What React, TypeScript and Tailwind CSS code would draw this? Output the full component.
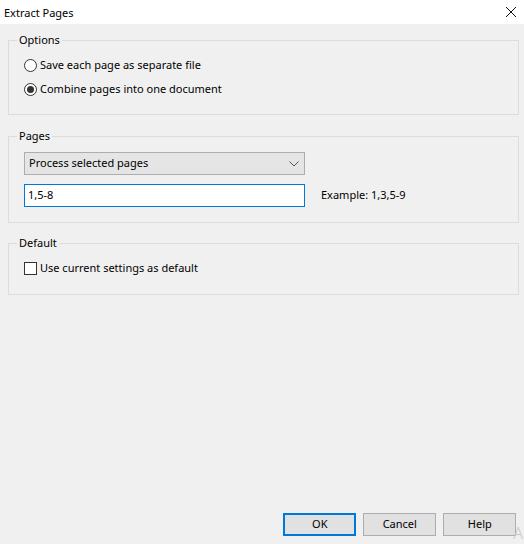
import React from "react"

const font = { fontFamily: '"Noto Sans", "Open Sans", sans-serif' }

function Radio({ checked, label }: { checked?: boolean; label: string }) {
  return (
    <label className="flex h-[24px] items-center">
      <span className="ml-[15px] flex h-[13px] w-[13px] items-center justify-center rounded-full border border-[#333333] bg-white">
        {checked && <span className="h-[7px] w-[7px] rounded-full bg-[#333333]" />}
      </span>
      <span className="ml-[3px]">{label}</span>
    </label>
  )
}

function Group({ title, className, children }: { title: string; className?: string; children: React.ReactNode }) {
  return (
    <fieldset className={`ml-[8px] mr-[5px] border border-[#dcdcdc] ${className ?? ""}`}>
      <legend className="ml-[8px] h-[16px] px-[2px] leading-[16px]">{title}</legend>
      {children}
    </fieldset>
  )
}

export default function App() {
  return (
    <div className="flex h-[544px] w-[524px] flex-col overflow-hidden bg-[#f0f0f0] text-[11px] text-black" style={font}>
      {/* title bar */}
      <div className="flex h-[24px] items-center justify-between bg-white pl-[4px] pr-[6px]">
        <span className="mt-[1px] leading-[16px]">Extract Pages</span>
        <svg width="12" height="12" viewBox="0 0 12 12" className="mr-[1px]">
          <path d="M1 1 L11 11 M11 1 L1 11" stroke="#111" strokeWidth="1" />
        </svg>
      </div>

      <Group title="Options" className="mt-[8px] pb-[13px]">
        <div className="mt-[5px]">
          <Radio label="Save each page as separate file" />
          <Radio checked label="Combine pages into one document" />
        </div>
      </Group>

      <Group title="Pages" className="mt-[13px] pb-[15px]">
        <div className="mt-[8px] ml-[15px] flex h-[23px] w-[281px] items-center justify-between border border-[#adadad] bg-[#e5e5e5] pl-[4px] pr-[5px]">
          <span>Process selected pages</span>
          <svg width="10" height="6" viewBox="0 0 10 6">
            <path d="M0.5 0.5 L5 5 L9.5 0.5" fill="none" stroke="#555" strokeWidth="1" />
          </svg>
        </div>
        <div className="mt-[9px] flex items-center">
          <div className="ml-[15px] flex h-[23px] w-[281px] items-center border border-[#0078d7] bg-white pl-[3px]">
            1,5-8
          </div>
          <span className="ml-[16px]">Example: 1,3,5-9</span>
        </div>
      </Group>

      <Group title="Default" className="mt-[12px] pb-[14px]">
        <label className="mt-[5px] flex h-[24px] items-center">
          <span className="ml-[15px] h-[13px] w-[13px] border border-[#333333] bg-white" />
          <span className="ml-[3px]">Use current settings as default</span>
        </label>
      </Group>

      <div className="mt-auto flex h-[44px] items-start justify-end">
        <button className="mt-[13px] h-[23px] w-[73px] border-2 border-[#0078d7] bg-[#e1e1e1]">OK</button>
        <button className="mt-[13px] ml-[7px] h-[23px] w-[73px] border border-[#adadad] bg-[#e1e1e1]">Cancel</button>
        <button className="mt-[13px] ml-[7px] h-[23px] w-[73px] border border-[#adadad] bg-[#e1e1e1]">Help</button>
        <span className="mt-[25px] ml-[-3px] mr-[1px] text-[16px] leading-[16px] font-light text-[#c8c8c8]">A</span>
      </div>
    </div>
  )
}
